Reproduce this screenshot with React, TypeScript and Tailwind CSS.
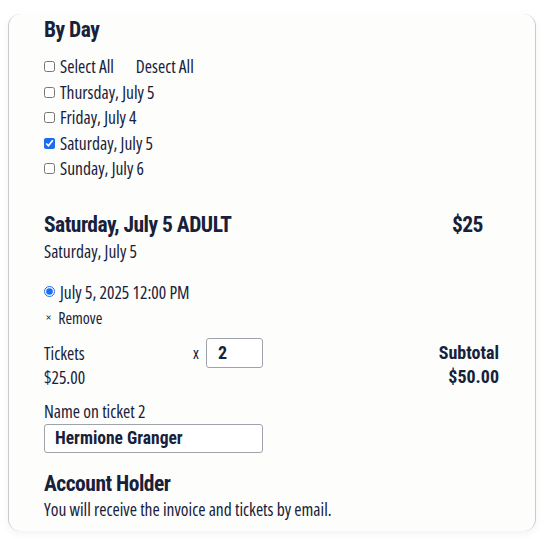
import React from "react";

const days = [
  { label: "Thursday, July 5", checked: false },
  { label: "Friday, July 4", checked: false },
  { label: "Saturday, July 5", checked: true },
  { label: "Sunday, July 6", checked: false },
];

function Box({ checked }: { checked?: boolean }) {
  return (
    <input
      type="checkbox"
      defaultChecked={checked}
      className="m-0 h-[11px] w-[11px] shrink-0 accent-[#1a6cf0]"
    />
  );
}

const head = "font-['Roboto_Condensed',sans-serif] text-[21.5px] font-bold leading-[26px] tracking-[-0.5px]";

export default function App() {
  return (
    <div className="min-h-[539px] bg-white pt-[14px] font-['Open_Sans',sans-serif] text-[17.5px] text-[#17213a] [font-stretch:75%]">
      <div className="mx-[8px] h-[517px] w-[528px] overflow-hidden rounded-[12px] border-x border-[#c9cacd] bg-[#fdfdfb] pl-[35px] pr-[36px] shadow-[0_3px_8px_rgba(0,0,0,0.05)]">
        <h2 className={`pt-[3px] ${head}`}>By Day</h2>

        <div className="mt-[11px] flex flex-col leading-[25.5px]">
          <div className="flex items-center gap-[5px]">
            <Box />
            <span>Select All</span>
            <span className="ml-[17px]">Desect All</span>
          </div>
          {days.map((d) => (
            <label key={d.label} className="flex items-center gap-[5px]">
              <Box checked={d.checked} />
              <span>{d.label}</span>
            </label>
          ))}
        </div>

        <div className="mt-[30px] flex items-start justify-between">
          <div>
            <h3 className={head}>Saturday, July 5 ADULT</h3>
            <p className="mt-[3px] leading-[20px]">Saturday, July 5</p>
          </div>
          <div className={`pr-[16px] ${head}`}>$25</div>
        </div>

        <label className="mt-[20px] flex items-center gap-[5px] leading-[22px]">
          <input type="radio" defaultChecked className="m-0 h-[11px] w-[11px] shrink-0 accent-[#1a6cf0]" />
          <span>July 5, 2025 12:00 PM</span>
        </label>
        <div className="mt-[5px] flex items-center gap-[7px] pl-[2px] text-[16px] leading-[20px]">
          <span className="text-[12px]">×</span>
          <span>Remove</span>
        </div>

        <div className="mt-[10px] flex items-start">
          <div className="w-[149px] pt-[3px] leading-[24px]">
            <div>Tickets</div>
            <div>$25.00</div>
          </div>
          <div className="flex items-center gap-[7px]">
            <span className="text-[16px]">x</span>
            <input
              defaultValue="2"
              className="h-[30px] w-[57px] rounded-[3px] border border-[#9ea3ab] bg-white px-[11px] font-['Roboto_Condensed',sans-serif] text-[18px] font-bold text-[#17213a] outline-none"
            />
          </div>
          <div className="ml-auto pt-[3px] text-right font-['Roboto_Condensed',sans-serif] text-[18px] font-bold leading-[24px]">
            <div>Subtotal</div>
            <div>$50.00</div>
          </div>
        </div>

        <div className="mt-[10px] leading-[24px]">Name on ticket 2</div>
        <input
          defaultValue="Hermione Granger"
          className="mt-[1px] h-[29px] w-[219px] rounded-[3px] border border-[#9ea3ab] bg-white px-[10px] font-['Roboto_Condensed',sans-serif] text-[17.5px] font-bold text-[#17213a] outline-none"
        />

        <h3 className={`mt-[18px] ${head}`}>Account Holder</h3>
        <p className="mt-[1px] leading-[22px]">You will receive the invoice and tickets by email.</p>
      </div>
    </div>
  );
}
